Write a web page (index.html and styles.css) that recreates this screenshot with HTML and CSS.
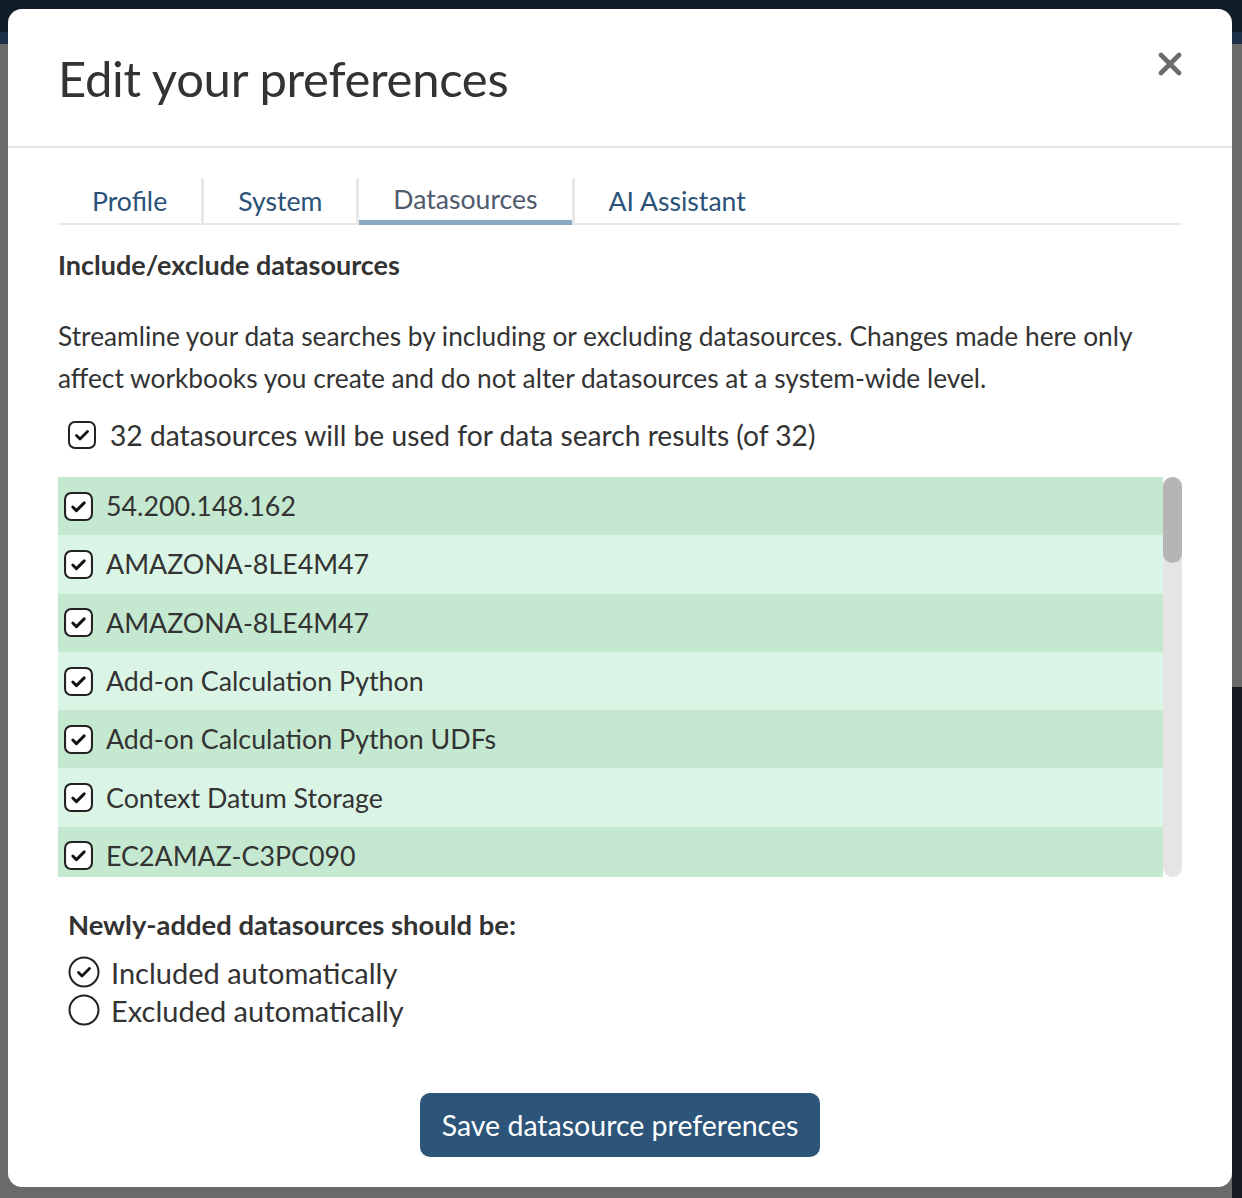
FILE: index.html
```html
<!DOCTYPE html>
<html lang="en">
<head>
    <meta charset="UTF-8">
    <title>Edit your preferences</title>
    <link rel="stylesheet" href="styles.css">
</head>
<body>

<div class="modal">
    <div class="modal-header">
        <h1>Edit your preferences</h1>
        <button class="close" aria-label="Close">
            <svg width="24" height="24" viewBox="0 0 24 24"><path d="M3 3 L21 21 M21 3 L3 21" stroke="#6b6b6b" stroke-width="4.6" stroke-linecap="round"/></svg>
        </button>
    </div>

    <div class="modal-body">
        <ul class="tabs">
            <li><a href="#">Profile</a></li>
            <li><a href="#">System</a></li>
            <li class="active"><a href="#">Datasources</a></li>
            <li><a href="#">AI Assistant</a></li>
        </ul>

        <h3>Include/exclude datasources</h3>
        <p class="intro">Streamline your data searches by including or excluding datasources. Changes made here only affect workbooks you create and do not alter datasources at a system-wide level.</p>

        <label class="check-all">
            <svg class="box" width="28" height="28" viewBox="0 0 28 28"><rect x="1" y="1" width="26" height="26" rx="6" fill="#fff" stroke="#222" stroke-width="2"/><path d="M8.5 14.5 L12 18 L19.5 10.5" fill="none" stroke="#111" stroke-width="2.8" stroke-linecap="round" stroke-linejoin="round"/></svg>
            32 datasources will be used for data search results (of 32)
        </label>

        <div class="ds-list">
            <ul class="ds-items">
                <li><svg class="box" width="29" height="29" viewBox="0 0 28 28"><rect x="1" y="1" width="26" height="26" rx="6" fill="#fff" stroke="#222" stroke-width="2"/><path d="M8.5 14.5 L12 18 L19.5 10.5" fill="none" stroke="#111" stroke-width="2.8" stroke-linecap="round" stroke-linejoin="round"/></svg>54.200.148.162</li>
                <li><svg class="box" width="29" height="29" viewBox="0 0 28 28"><rect x="1" y="1" width="26" height="26" rx="6" fill="#fff" stroke="#222" stroke-width="2"/><path d="M8.5 14.5 L12 18 L19.5 10.5" fill="none" stroke="#111" stroke-width="2.8" stroke-linecap="round" stroke-linejoin="round"/></svg>AMAZONA-8LE4M47</li>
                <li><svg class="box" width="29" height="29" viewBox="0 0 28 28"><rect x="1" y="1" width="26" height="26" rx="6" fill="#fff" stroke="#222" stroke-width="2"/><path d="M8.5 14.5 L12 18 L19.5 10.5" fill="none" stroke="#111" stroke-width="2.8" stroke-linecap="round" stroke-linejoin="round"/></svg>AMAZONA-8LE4M47</li>
                <li><svg class="box" width="29" height="29" viewBox="0 0 28 28"><rect x="1" y="1" width="26" height="26" rx="6" fill="#fff" stroke="#222" stroke-width="2"/><path d="M8.5 14.5 L12 18 L19.5 10.5" fill="none" stroke="#111" stroke-width="2.8" stroke-linecap="round" stroke-linejoin="round"/></svg>Add-on Calculation Python</li>
                <li><svg class="box" width="29" height="29" viewBox="0 0 28 28"><rect x="1" y="1" width="26" height="26" rx="6" fill="#fff" stroke="#222" stroke-width="2"/><path d="M8.5 14.5 L12 18 L19.5 10.5" fill="none" stroke="#111" stroke-width="2.8" stroke-linecap="round" stroke-linejoin="round"/></svg>Add-on Calculation Python UDFs</li>
                <li><svg class="box" width="29" height="29" viewBox="0 0 28 28"><rect x="1" y="1" width="26" height="26" rx="6" fill="#fff" stroke="#222" stroke-width="2"/><path d="M8.5 14.5 L12 18 L19.5 10.5" fill="none" stroke="#111" stroke-width="2.8" stroke-linecap="round" stroke-linejoin="round"/></svg>Context Datum Storage</li>
                <li><svg class="box" width="29" height="29" viewBox="0 0 28 28"><rect x="1" y="1" width="26" height="26" rx="6" fill="#fff" stroke="#222" stroke-width="2"/><path d="M8.5 14.5 L12 18 L19.5 10.5" fill="none" stroke="#111" stroke-width="2.8" stroke-linecap="round" stroke-linejoin="round"/></svg>EC2AMAZ-C3PC090</li>
            </ul>
            <div class="scrollbar"><div class="thumb"></div></div>
        </div>

        <h4>Newly-added datasources should be:</h4>
        <div class="radios">
            <label class="radio">
                <svg width="32" height="32" viewBox="0 0 32 32"><circle cx="16" cy="16" r="14.5" fill="#fff" stroke="#222" stroke-width="2"/><path d="M10.5 16.5 L14 20 L21.5 12.5" fill="none" stroke="#111" stroke-width="2.8" stroke-linecap="round" stroke-linejoin="round"/></svg>
                Included automatically
            </label>
            <label class="radio">
                <svg width="32" height="32" viewBox="0 0 32 32"><circle cx="16" cy="16" r="14.5" fill="#fff" stroke="#222" stroke-width="2"/></svg>
                Excluded automatically
            </label>
        </div>

        <div class="actions">
            <button class="save">Save datasource preferences</button>
        </div>
    </div>
</div>

</body>
</html>
```

FILE: styles.css
```css
body {
    margin: 0;
    height: 1198px;
    overflow: hidden;
    font-family: Lato, "Liberation Sans", sans-serif;
    color: #333;
    background:
        linear-gradient(to right, transparent 1232px, #161b22 1232px) 0 687px / 100% 100% no-repeat,
        linear-gradient(#101c27 0, #101c27 32px, #1d3148 32px, #1d3148 44px, #6a6a6a 44px);
}

.modal {
    width: 1224px;
    height: 1178px;
    margin: 9px 0 0 8px;
    background: #fff;
    border-radius: 14px;
    box-sizing: border-box;
}

.modal-header {
    height: 139px;
    display: flex;
    align-items: center;
    justify-content: space-between;
    padding: 0 50px 0 50px;
    border-bottom: 2px solid #e5e5e5;
    box-sizing: border-box;
}

.modal-header h1 {
    margin: 0;
    font-size: 49px;
    font-weight: 400;
    color: #333;
    letter-spacing: -0.3px;
}

.close {
    background: none;
    border: none;
    padding: 0;
    margin: -24px 0 0 0;
    cursor: pointer;
}

.modal-body {
    padding: 30px 50px 30px 50px;
}

.tabs {
    list-style: none;
    margin: 0;
    padding: 0;
    display: flex;
    border-bottom: 2px solid #e8e8e8;
}

.tabs li {
    border-right: 3px solid #e8e8e8;
}

.tabs li:last-child {
    border-right: none;
}

.tabs a {
    display: block;
    padding: 0 34px;
    height: 45px;
    line-height: 47px;
    font-size: 26.6px;
    color: #2b5279;
    text-decoration: none;
    box-sizing: border-box;
}

.tabs .active a {
    color: #4f5a6c;
    line-height: 43px;
    border-bottom: 5px solid #8aa9c2;
    margin-bottom: -2px;
    height: 47px;
}

h3 {
    margin: 25px 0 0 0;
    font-size: 27px;
    line-height: 30px;
    font-weight: 700;
}

.intro {
    margin: 35px 0 0 0;
    font-size: 26.3px;
    line-height: 42px;
}

.check-all {
    display: flex;
    align-items: center;
    gap: 14px;
    margin: 21px 0 0 10px;
    height: 30px;
    font-size: 28.2px;
}

.ds-list {
    display: flex;
    height: 400px;
    margin-top: 27px;
}

.ds-items {
    list-style: none;
    margin: 0;
    padding: 0;
    flex: 1;
    overflow: hidden;
}

.ds-items li {
    display: flex;
    align-items: center;
    gap: 13px;
    height: 58.3px;
    padding-left: 6px;
    font-size: 26.8px;
    background: #daf5e5;
}

.ds-items li:nth-child(odd) {
    background: #c5e8d1;
}

.scrollbar {
    width: 19px;
    background: #e5e5e5;
    border-radius: 10px;
}

.thumb {
    height: 86px;
    background: #b5b5b5;
    border-radius: 10px;
}

h4 {
    margin: 33px 0 0 10px;
    font-size: 27.4px;
    line-height: 30px;
    font-weight: 700;
}

.radios {
    margin: 13px 0 0 10px;
}

.radio {
    display: flex;
    align-items: center;
    gap: 11px;
    height: 38px;
    font-size: 29px;
}

.actions {
    display: flex;
    justify-content: center;
    margin-top: 64px;
}

.save {
    height: 64px;
    padding: 0 22px;
    background: #2d5479;
    color: #fff;
    border: none;
    border-radius: 10px;
    font-family: inherit;
    font-size: 28.5px;
    cursor: pointer;
}
```
